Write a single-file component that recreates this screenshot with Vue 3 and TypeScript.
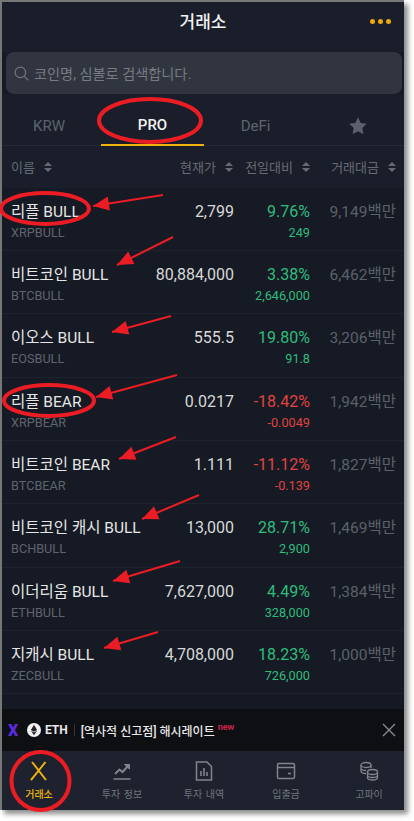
<script setup lang="ts">
interface Row { name: string; sym: string; price: string; pct: string; diff: string; vol: string; up: boolean }
const rows: Row[] = [
  { name: '리플 BULL', sym: 'XRPBULL', price: '2,799', pct: '9.76%', diff: '249', vol: '9,149', up: true },
  { name: '비트코인 BULL', sym: 'BTCBULL', price: '80,884,000', pct: '3.38%', diff: '2,646,000', vol: '6,462', up: true },
  { name: '이오스 BULL', sym: 'EOSBULL', price: '555.5', pct: '19.80%', diff: '91.8', vol: '3,206', up: true },
  { name: '리플 BEAR', sym: 'XRPBEAR', price: '0.0217', pct: '-18.42%', diff: '-0.0049', vol: '1,942', up: false },
  { name: '비트코인 BEAR', sym: 'BTCBEAR', price: '1.111', pct: '-11.12%', diff: '-0.139', vol: '1,827', up: false },
  { name: '비트코인 캐시 BULL', sym: 'BCHBULL', price: '13,000', pct: '28.71%', diff: '2,900', vol: '1,469', up: true },
  { name: '이더리움 BULL', sym: 'ETHBULL', price: '7,627,000', pct: '4.49%', diff: '328,000', vol: '1,384', up: true },
  { name: '지캐시 BULL', sym: 'ZECBULL', price: '4,708,000', pct: '18.23%', diff: '726,000', vol: '1,000', up: true },
]
const arrows: [number, number, number, number][] = [
  [163, 195, 93, 206],
  [173, 237, 117, 265],
  [171, 316, 112, 332],
  [177, 375, 96, 397],
  [176, 437, 119, 459],
  [199, 495, 142, 519],
  [180, 561, 113, 581],
  [158, 632, 104, 648],
]
function head(a: number[]): string {
  const [x1, y1, x2, y2] = a
  const l = Math.hypot(x2 - x1, y2 - y1)
  const ux = (x2 - x1) / l
  const uy = (y2 - y1) / l
  const bx = x2 - ux * 16
  const by = y2 - uy * 16
  return `${x2},${y2} ${bx - uy * 7},${by + ux * 7} ${bx + uy * 7},${by - ux * 7}`
}
</script>

<template>
  <div class="page">
    <div class="frame">
      <header class="top">
        <h1 class="title">거래소</h1>
        <div class="dots"><i></i><i></i><i></i></div>
      </header>
      <div class="search">
        <svg width="15" height="15" viewBox="0 0 16 16" fill="none" stroke="#70757f" stroke-width="1.3"><circle cx="6.8" cy="6.8" r="5.6"/><path d="M11 11l4.2 4.2"/></svg>
        <span>코인명, 심볼로 검색합니다.</span>
      </div>
      <nav class="tabs">
        <div class="tab first">KRW</div>
        <div class="tab on">PRO</div>
        <div class="tab">DeFi</div>
        <div class="tab last">
          <svg width="18" height="17" viewBox="0 0 24 23" fill="#5b606c"><path d="M12 .5l3.6 7.6 8.2 1.1-6 5.8 1.5 8.2L12 19.2l-7.3 4 1.5-8.2-6-5.8 8.2-1.1z"/></svg>
        </div>
      </nav>
      <div class="cols">
        <span class="c-name">이름 <svg class="sort" viewBox="0 0 8 10"><path d="M4 0l4 4H0zM4 10L0 6h8z"/></svg></span>
        <span class="c-price">현재가 <svg class="sort" viewBox="0 0 8 10"><path d="M4 0l4 4H0zM4 10L0 6h8z"/></svg></span>
        <span class="c-pct">전일대비 <svg class="sort" viewBox="0 0 8 10"><path d="M4 0l4 4H0zM4 10L0 6h8z"/></svg></span>
        <span class="c-vol">거래대금 <svg class="sort" viewBox="0 0 8 10"><path d="M4 0l4 4H0zM4 10L0 6h8z"/></svg></span>
      </div>
      <div class="list">
        <div v-for="r in rows" :key="r.sym" class="row">
          <div class="name">{{ r.name }}</div>
          <div class="price">{{ r.price }}</div>
          <div class="pct" :class="r.up ? 'up' : 'down'">{{ r.pct }}</div>
          <div class="vol">{{ r.vol }}백만</div>
          <div class="sym">{{ r.sym }}</div>
          <div class="diff" :class="r.up ? 'up' : 'down'">{{ r.diff }}</div>
        </div>
      </div>
      <div class="spacer"></div>
      <div class="banner">
        <span class="x-logo">X</span>
        <svg class="eth" width="14" height="14" viewBox="0 0 14 14"><circle cx="7" cy="7" r="7" fill="#f2f2f2"/><path d="M7 1.8L3.9 7 7 8.8 10.1 7zM3.9 7.7L7 12.2l3.1-4.5L7 9.5z" fill="#222"/></svg>
        <b class="eth-t">ETH</b>
        <span class="sep"></span>
        <b class="msg">[역사적 신고점] 해시레이트</b>
        <em class="new">new</em>
        <svg class="close" width="14" height="14" viewBox="0 0 14 14" stroke="#8a8d94" stroke-width="1.3" fill="none"><path d="M1 1l12 12M13 1L1 13"/></svg>
      </div>
      <footer class="nav">
        <div class="item on">
          <svg width="20" height="20" viewBox="0 0 20 20" fill="none" stroke="#f0b30c" stroke-width="2"><path d="M3 1c4 5 8.5 11 14 18M16.5 1C11 8 7 13 2 19"/></svg>
          <span>거래소</span>
        </div>
        <div class="item">
          <svg width="20" height="20" viewBox="0 0 20 20" fill="none" stroke="#80848c" stroke-width="2"><path d="M3 13l4.5-4.5 3 2.5L16 5"/><path d="M12.5 3.5H17.5V8z" fill="#80848c" stroke-width="1"/><path d="M1.5 18h17" stroke-width="1.5"/></svg>
          <span>투자 정보</span>
        </div>
        <div class="item">
          <svg width="20" height="20" viewBox="0 0 20 20" fill="none" stroke="#80848c" stroke-width="1.5"><path d="M2.5 1h10.500l4.500 4.500V19h-15z"/><path d="M7 15V10M10 15V7M13 15V11" stroke-width="1.6"/></svg>
          <span>투자 내역</span>
        </div>
        <div class="item">
          <svg width="20" height="20" viewBox="0 0 20 20" fill="none" stroke="#80848c" stroke-width="1.5"><rect x="1.5" y="2.5" width="17" height="15" rx="1.5"/><path d="M1.5 6.5h17M12 12.5h3"/></svg>
          <span>입출금</span>
        </div>
        <div class="item">
          <svg width="20" height="20" viewBox="0 0 20 20" fill="none" stroke="#80848c" stroke-width="1.3"><ellipse cx="7" cy="4" rx="5" ry="2.5"/><path d="M2 4v6c0 1.4 2.2 2.5 5 2.5M12 4v3M2 7c0 1.4 2.2 2.5 5 2.5"/><ellipse cx="13.500" cy="11" rx="5" ry="2.5"/><path d="M8.500 11v5.500c0 1.4 2.2 2.5 5 2.5s5-1.100 5-2.500V11M8.500 14c0 1.4 2.2 2.5 5 2.5s5-1.100 5-2.500"/></svg>
          <span>고파이</span>
        </div>
      </footer>
    </div>
    <svg class="marks" width="414" height="821" viewBox="0 0 414 821">
      <g fill="none" stroke="#ec1c24" stroke-width="4">
        <ellipse cx="150" cy="120.5" rx="51" ry="21.5"/>
        <ellipse cx="45" cy="208.5" rx="44" ry="15.5"/>
        <ellipse cx="49" cy="400.5" rx="45" ry="15.5"/>
        <circle cx="40.5" cy="781" r="29"/>
      </g>
      <g v-for="(a, i) in arrows" :key="i">
        <line :x1="a[0]" :y1="a[1]" :x2="a[2]" :y2="a[3]" stroke="#ec1c24" stroke-width="2"/>
        <polygon :points="head(a)" fill="#ec1c24"/>
      </g>
    </svg>
  </div>
</template>

<style>
html, body { margin: 0; background: #fff; }
</style>

<style scoped>
.page {
  position: relative;
  width: 414px;
  height: 821px;
  background: #fff;
  overflow: hidden;
  font-family: Roboto, "Noto Sans CJK KR", sans-serif;
}
.frame {
  box-sizing: border-box;
  width: 404px;
  height: 810px;
  display: flex;
  flex-direction: column;
  background: #161a24;
  border-top: 2px solid #777;
  border-left: 2px solid #777;
  box-shadow: 4px 4px 5px rgba(0, 0, 0, 0.45);
}
.top {
  height: 50px;
  flex: none;
  display: flex;
  align-items: center;
  justify-content: center;
  position: relative;
  background: #1a1e2a;
  padding-bottom: 14px;
  box-sizing: border-box;
}
.title {
  margin: 0;
  font-size: 17px;
  font-weight: 500;
  color: #f2f2f2;
}
.dots {
  position: absolute;
  right: 13px;
  top: 17px;
  display: flex;
  gap: 3px;
}
.dots i {
  width: 5px;
  height: 5px;
  border-radius: 50%;
  background: #f0a90a;
}
.search {
  margin-left: 4px;
  width: 396px;
  height: 42px;
  flex: none;
  border-radius: 8px;
  background: #31353f;
  display: flex;
  align-items: center;
  gap: 5px;
  padding-left: 8px;
  box-sizing: border-box;
  color: #777b84;
  font-size: 14.2px;
}
.tabs {
  height: 52px;
  flex: none;
  display: grid;
  grid-template-columns: 99px 103px 103px 97px;
  background: #1a1e2a;
}
.tab {
  display: flex;
  align-items: center;
  justify-content: center;
  padding-top: 12px;
  box-sizing: border-box;
  font-size: 15px;
  color: #5f636e;
  border-bottom: 1px solid #252934;
}
.tab.first { padding-right: 5px; }
.tab.last { padding-left: 5px; }
.tab.on {
  color: #f2f2f2;
  font-weight: 500;
  border-bottom: 2px solid #f0b30c;
}
.cols {
  height: 41.67px;
  flex: none;
  display: grid;
  grid-template-columns: 121px 102px 76px 86px;
  padding-left: 9px;
  align-items: center;
  font-size: 13px;
  color: #666a74;
  background: #1a1e2a;
  box-sizing: border-box;
}
.cols span { display: flex; align-items: center; justify-content: flex-end; gap: 9px; white-space: nowrap; }
.cols .c-name { justify-content: flex-start; }
.cols .c-price { margin-right: 1px; }
.sort { width: 8px; height: 10px; fill: #666a74; flex: none; }
.list { flex: none; }
.row {
  height: 63.33px;
  box-sizing: border-box;
  padding: 13px 0 0 9px;
  border-bottom: 1px solid #1e222c;
  display: grid;
  grid-template-columns: 121px 102px 76px 86px;
  grid-template-rows: 21px 22px;
  align-items: baseline;
  white-space: nowrap;
}
.name { font-size: 15.5px; line-height: 22px; color: #e6e6e6; }
.price { font-size: 16px; line-height: 22px; color: #d8d8d8; text-align: right; }
.pct { font-size: 16px; line-height: 22px; text-align: right; }
.vol { font-size: 15.5px; line-height: 22px; color: #5c606a; text-align: right; }
.sym { font-size: 12.7px; line-height: 22px; color: #5f636e; grid-column: 1 / 3; }
.diff { font-size: 12.7px; line-height: 22px; text-align: right; }
.up { color: #2ebd7c; }
.down { color: #e0433f; }
.spacer { flex: 1; background: #151923; }
.banner {
  height: 42px;
  flex: none;
  background: #0e0f13;
  display: flex;
  align-items: center;
  padding-left: 6px;
  position: relative;
  font-size: 12px;
  color: #e8e8e8;
}
.x-logo {
  font-weight: 900;
  font-size: 16px;
  color: #5b2be0;
  width: 19px;
}
.eth { margin-right: 4px; }
.eth-t { font-weight: 700; }
.sep { width: 1px; height: 12px; background: #333; margin: 0 6px; }
.msg { font-weight: 500; }
.new { font-size: 9px; font-weight: 700; font-style: normal; color: #c8234a; margin: -6px 0 0 3px; }
.close { position: absolute; right: 8px; top: 14px; }
.nav {
  height: 59px;
  flex: none;
  display: flex;
  gap: 22px;
  background: #1e222e;
  box-sizing: border-box;
  padding: 10px 0 0 7px;
}
.item {
  width: 60px;
  display: flex;
  flex-direction: column;
  align-items: center;
  gap: 7px;
  font-size: 10px;
  line-height: 14px;
  word-spacing: 1px;
  white-space: nowrap;
  color: #70747c;
}
.item:nth-child(2) { margin-left: 1px; }
.item:nth-child(5) { margin-left: 1px; }
.item.on { color: #f0b30c; font-weight: 500; }
.marks { position: absolute; left: 0; top: 0; pointer-events: none; }
</style>
